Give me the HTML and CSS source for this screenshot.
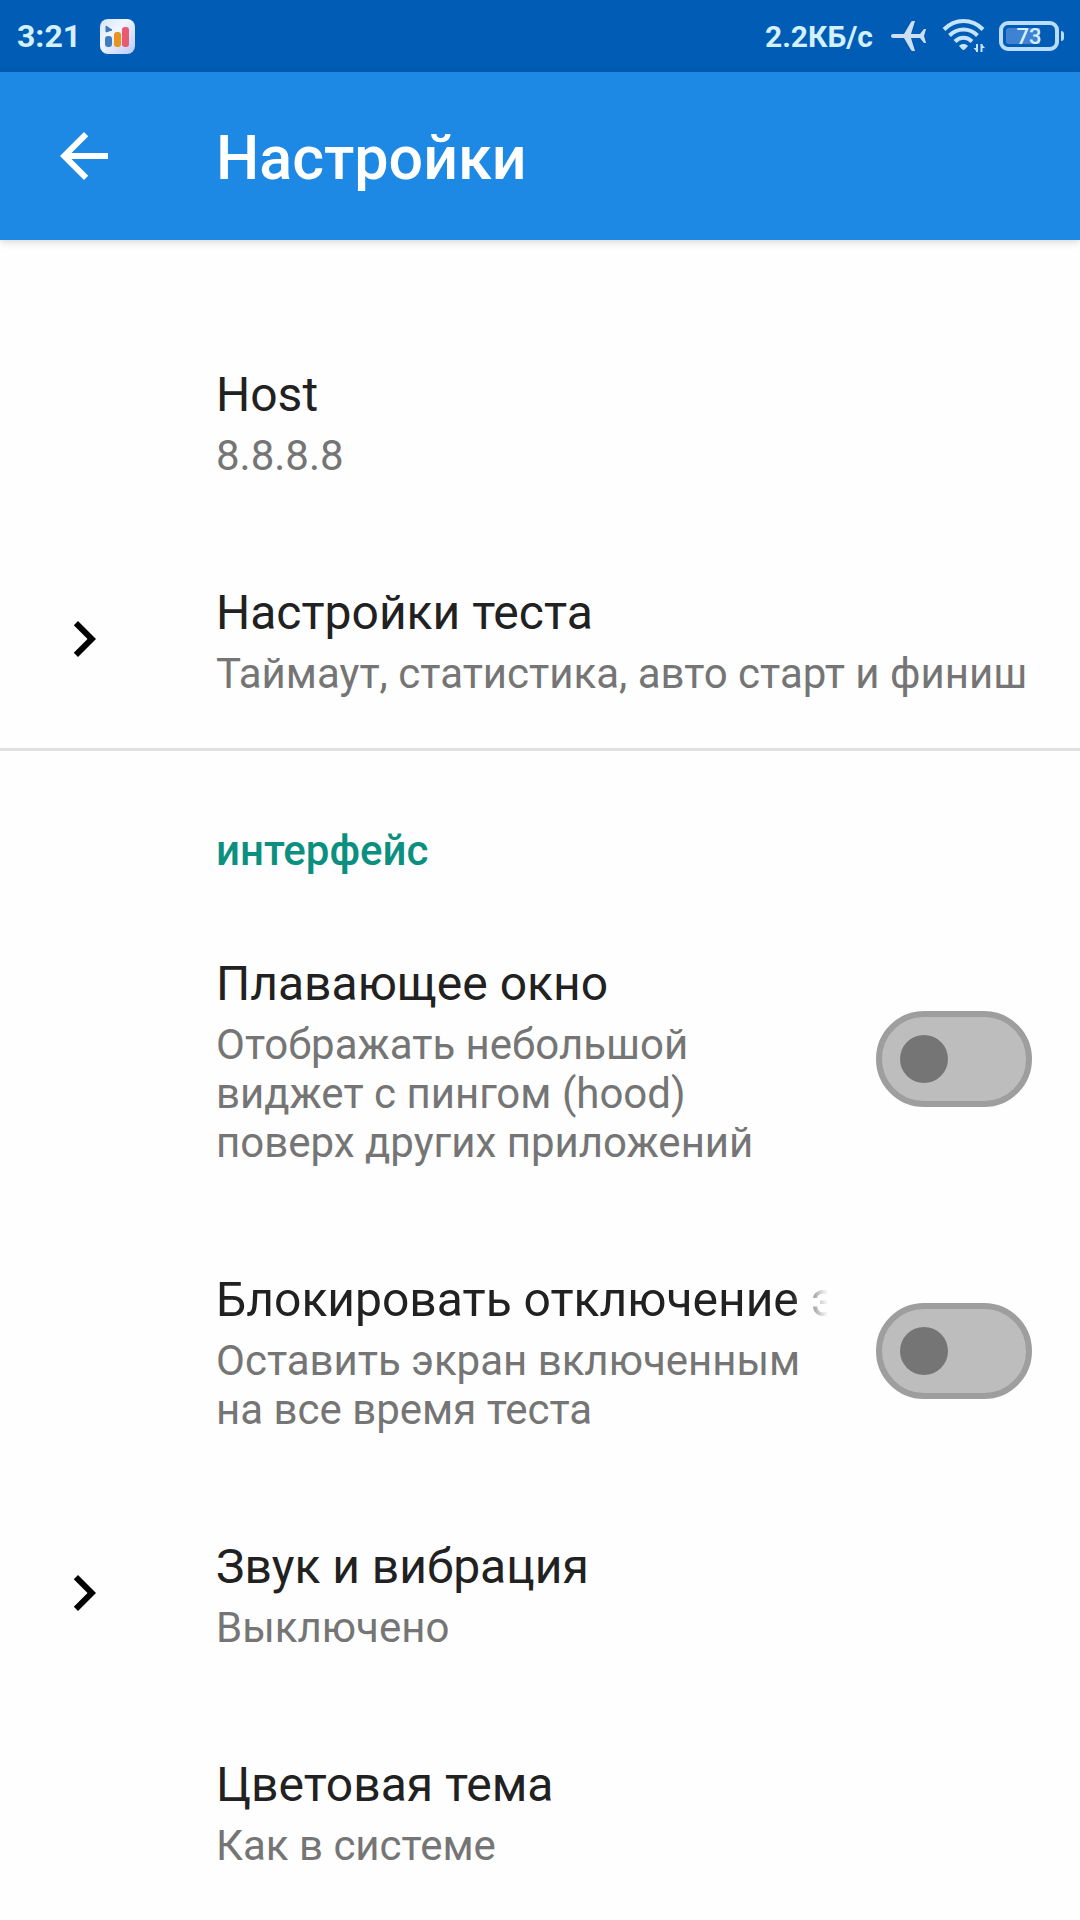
FILE: index.html
```html
<!DOCTYPE html>
<html lang="ru">
<head>
  <meta charset="utf-8">
  <meta name="viewport" content="width=device-width, initial-scale=1">
  <title>Настройки</title>
  <link rel="stylesheet" href="styles.css">
</head>
<body>
  <div class="status-bar">
    <span class="clock">3:21</span>
    <svg class="app-badge" viewBox="0 0 35 35" aria-hidden="true">
      <defs>
        <linearGradient id="badge" x1="0" y1="0" x2="1" y2="1">
          <stop offset="0" stop-color="#d3e4fc"/>
          <stop offset=".4" stop-color="#f1f5ff"/>
          <stop offset="1" stop-color="#b9c8fa"/>
        </linearGradient>
      </defs>
      <rect width="35" height="35" rx="8" fill="url(#badge)"/>
      <path d="M6 7l6 4-6 2z" fill="#4377b4" stroke="#4377b4" stroke-linejoin="round"/>
      <rect x="5" y="17" width="7" height="11" rx="3" fill="#3f7cc0"/>
      <rect x="14" y="13" width="7" height="15" rx="3" fill="#e8941f"/>
      <rect x="22" y="8" width="7" height="20" rx="3" fill="#e75a70"/>
    </svg>
    <span class="speed">2.2КБ/с</span>
    <svg class="plane" viewBox="0 0 35 30" aria-hidden="true">
      <path d="M0 15c0-1.300 1-2 2-2h11L20 1c.4-.7 1-1 1.700-1H24l-4 13h9l4-5h2l-2 7 2 7h-2l-4-5h-9l4 13h-2.300c-.7 0-1.300-.3-1.700-1L13 17H2c-1 0-2-.7-2-2z"/>
    </svg>
    <svg class="wifi" viewBox="0 0 43 34" aria-hidden="true">
      <g fill="none" stroke="currentColor" stroke-width="4">
        <path d="M2 10.500C13-.7 30-.7 41 10.500"/>
        <path d="M7.500 16.500c8-8 20-8 28 0"/>
        <path d="M13 22.500c5-5 12-5 17 0"/>
      </g>
      <path d="M17 27c2.500-2.600 6.500-2.600 9 0l-3 3.200c-.9.900-2.100.9-3 0z" fill="currentColor"/>
      <path d="M35 25v8M39.500 33v-8" stroke="currentColor" stroke-width="2"/>
      <path d="M31.500 29H35v4zM43 29h-3.500v-4z" fill="currentColor"/>
    </svg>
    <span class="battery"><span class="battery-level">73</span></span>
  </div>

  <header class="app-bar">
    <button class="back" type="button" aria-label="Назад">
      <svg class="icon" viewBox="0 0 24 24" aria-hidden="true"><path d="M20 11H7.830l5.590-5.590L12 4l-8 8 8 8 1.410-1.410L7.830 13H20v-2z"/></svg>
    </button>
    <h1 class="app-title">Настройки</h1>
  </header>

  <main class="settings">
    <button class="row" type="button">
      <span class="row-text">
        <span class="row-title">Host</span>
        <span class="row-summary">8.8.8.8</span>
      </span>
    </button>
    <a class="row" href="#test">
      <svg class="icon" viewBox="0 0 24 24" aria-hidden="true"><path d="M10 6L8.590 7.410 13.170 12l-4.580 4.590L10 18l6-6z"/></svg>
      <span class="row-text">
        <span class="row-title">Настройки теста</span>
        <span class="row-summary">Таймаут, статистика, авто старт и финиш</span>
      </span>
    </a>

    <section class="group">
      <h2 class="group-title">интерфейс</h2>
      <label class="row" for="floating">
        <span class="row-text">
          <span class="row-title">Плавающее окно</span>
          <span class="row-summary">Отображать небольшой виджет с пингом (hood) поверх других приложений</span>
        </span>
        <input class="switch" id="floating" type="checkbox" role="switch">
      </label>
      <label class="row" for="keep-on">
        <span class="row-text">
          <span class="row-title row-title-faded">Блокировать отключение экрана</span>
          <span class="row-summary">Оставить экран включенным на все время теста</span>
        </span>
        <input class="switch" id="keep-on" type="checkbox" role="switch">
      </label>
      <a class="row" href="#sound">
        <svg class="icon" viewBox="0 0 24 24" aria-hidden="true"><path d="M10 6L8.590 7.410 13.170 12l-4.580 4.590L10 18l6-6z"/></svg>
        <span class="row-text">
          <span class="row-title">Звук и вибрация</span>
          <span class="row-summary">Выключено</span>
        </span>
      </a>
      <button class="row" type="button">
        <span class="row-text">
          <span class="row-title">Цветовая тема</span>
          <span class="row-summary">Как в системе</span>
        </span>
      </button>
    </section>
  </main>
</body>
</html>
```
FILE: styles.css
```css
* {
  box-sizing: border-box;
}

body {
  margin: 0;
  background: #fefefe;
  color: #212121;
  font-family: Roboto, "Liberation Sans", sans-serif;
}

.status-bar {
  display: flex;
  align-items: center;
  height: 72px;
  padding: 0 17px;
  background: #005cb4;
  color: #d3f0ff;
  font-weight: 700;
}

.clock {
  font-size: 32px;
}

.app-badge {
  width: 35px;
  height: 35px;
  margin-left: 19px;
}

.speed {
  margin-left: auto;
  font-size: 30px;
}

.plane {
  width: 35px;
  height: 30px;
  margin-left: 18px;
  fill: #cfdff2;
}

.wifi {
  width: 43px;
  height: 34px;
  margin-left: 16px;
  color: #c4e4ff;
}

.battery {
  display: flex;
  width: 60px;
  height: 30px;
  margin: 0 4px 0 14px;
  padding: 3px;
  border: 4px solid #b9dcff;
  border-radius: 9px;
  position: relative;
}

.battery::after {
  content: "";
  position: absolute;
  top: 6px;
  right: -9px;
  width: 3px;
  height: 10px;
  border-radius: 0 3px 3px 0;
  background: #b9dcff;
}

.battery-level {
  flex: 1;
  border-radius: 3px;
  background: linear-gradient(90deg, #3f82d2 73%, transparent 73%);
  font-size: 22px;
  font-weight: 500;
  line-height: 18px;
  text-align: center;
}

.app-bar {
  display: flex;
  align-items: center;
  height: 168px;
  padding: 0 48px;
  background: #1e88e5;
  color: #fff;
  box-shadow: 0 2px 8px rgba(0, 0, 0, 0.16);
}

.back {
  flex: none;
  width: 168px;
  padding: 0;
  border: 0;
  background: none;
  color: inherit;
  text-align: left;
}

.icon {
  flex: none;
  display: block;
  width: 72px;
  height: 72px;
  fill: currentColor;
}

.app-title {
  margin: 0;
  padding-top: 3px;
  font-size: 61px;
  font-weight: 500;
  line-height: 72px;
}

.settings {
  padding-top: 72px;
}

.row {
  display: flex;
  align-items: center;
  width: 100%;
  padding: 0 48px;
  border: 0;
  background: none;
  color: inherit;
  font: inherit;
  text-align: left;
  text-decoration: none;
}

.row .icon {
  margin-right: -72px;
  color: #000;
}

.row-text {
  flex: 1;
  display: flex;
  flex-direction: column;
  gap: 8px;
  min-width: 0;
  margin-left: 168px;
  padding: 55px 0 50px;
}

.row-title {
  overflow: hidden;
  font-size: 48px;
  line-height: 56px;
  white-space: nowrap;
}

.row-title-faded {
  -webkit-mask-image: linear-gradient(270deg, transparent, #000 36px);
  mask-image: linear-gradient(270deg, transparent, #000 36px);
}

.row-summary {
  color: #757575;
  font-size: 42px;
  line-height: 49px;
}

.group {
  border-top: 3px solid #e0e0e0;
}

.group-title {
  margin: 0;
  padding: 75px 48px 26px 216px;
  color: #0b9080;
  font-size: 42px;
  font-weight: 500;
  line-height: 49px;
}

.switch {
  appearance: none;
  flex: none;
  display: flex;
  align-items: center;
  width: 156px;
  height: 96px;
  margin: 0 0 0 48px;
  padding: 0 18px;
  border: 6px solid #9e9e9e;
  border-radius: 48px;
  background: #bdbdbd;
}

.switch::before {
  content: "";
  width: 48px;
  height: 48px;
  border-radius: 50%;
  background: #757575;
}

.switch:checked {
  justify-content: flex-end;
}
```
